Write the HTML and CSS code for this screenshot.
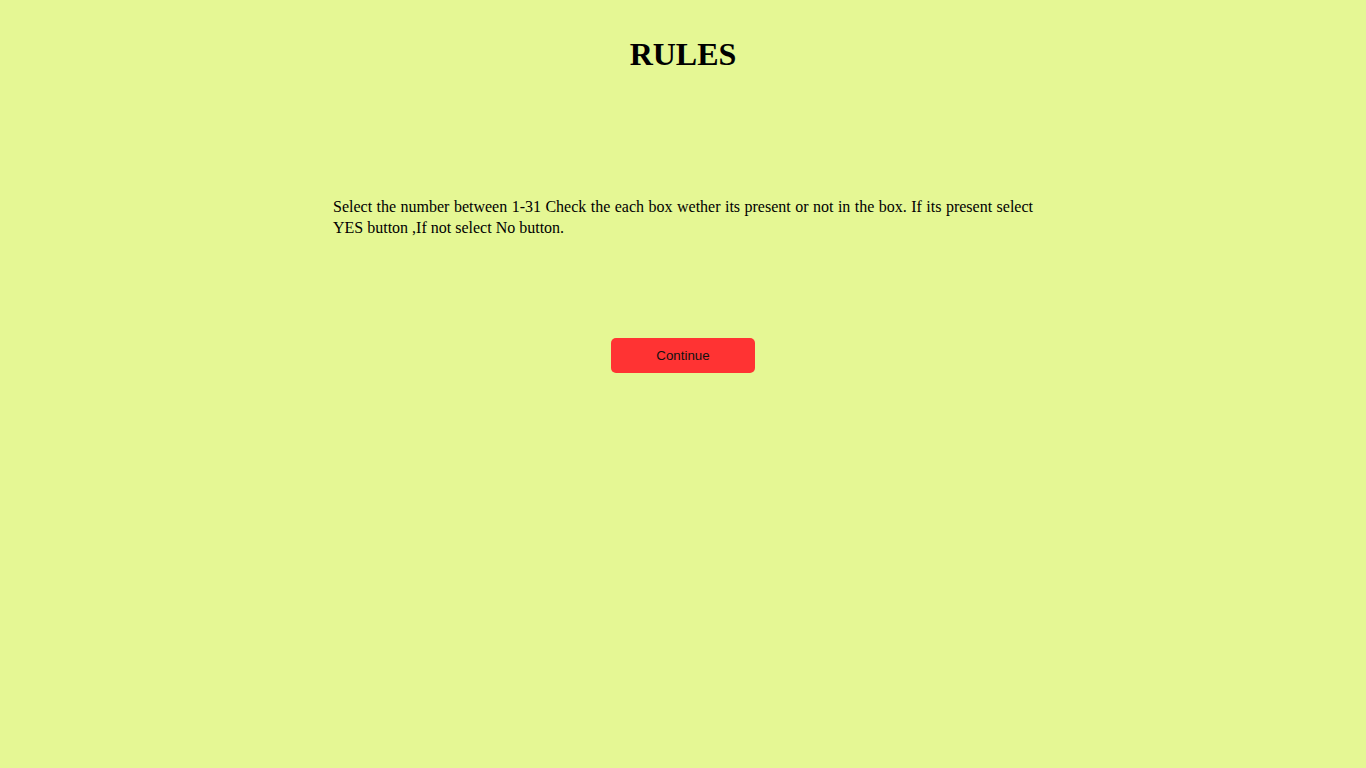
FILE: index.html
```html
<!DOCTYPE html>
<html lang="en">
<head>
<meta charset="utf-8">
<title>Rules</title>
<link rel="stylesheet" href="styles.css">
</head>
<body>
<main class="page">
  <h1 class="title">RULES</h1>
  <p class="rules-text">Select the number between 1-31 Check the each box wether its present or not in the box. If its present select YES button ,If not select No button.</p>
  <button class="continue-btn" type="button">Continue</button>
</main>
</body>
</html>
```

FILE: styles.css
```css
html, body {
  margin: 0;
  padding: 0;
  background: #e5f794;
  min-height: 100%;
}

body {
  min-height: 768px;
  font-family: "Liberation Serif", "Times New Roman", serif;
  color: #000;
}

.page {
  display: flex;
  flex-direction: column;
  align-items: center;
  padding-top: 36px;
}

.title {
  margin: 0;
  font-size: 32px;
  font-weight: bold;
  line-height: 37px;
}

.rules-text {
  width: 700px;
  margin: 123px 0 0 0;
  font-size: 16px;
  line-height: 21px;
  text-align: justify;
}

.continue-btn {
  margin-top: 100px;
  width: 144px;
  height: 35px;
  border: none;
  border-radius: 5px;
  background: #ff3333;
  color: #111;
  font-family: "Liberation Sans", Arial, sans-serif;
  font-size: 13.333px;
  cursor: pointer;
}
```
